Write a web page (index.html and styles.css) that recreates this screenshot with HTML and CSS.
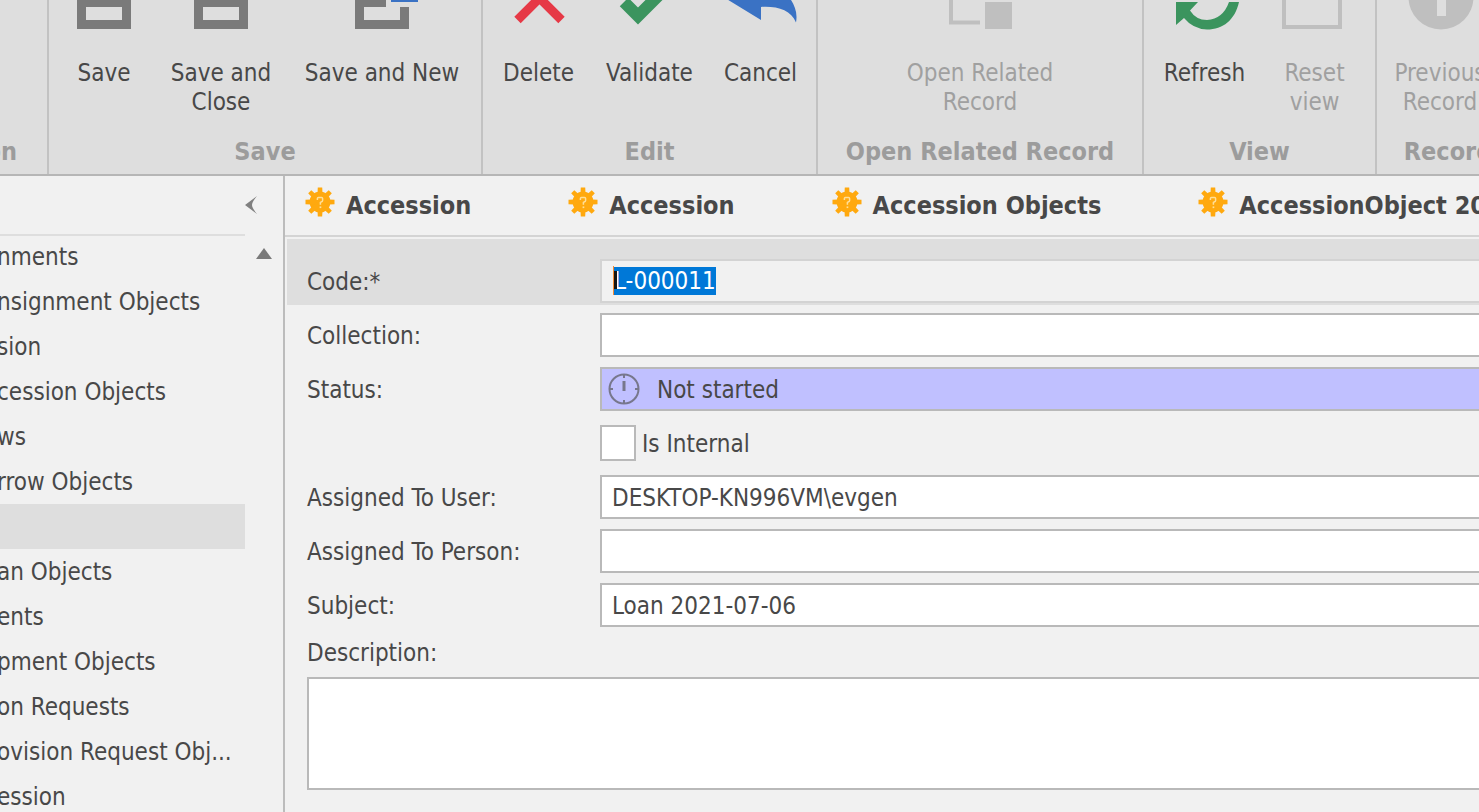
FILE: index.html
```html
<!DOCTYPE html>
<html lang="en">
<head>
<meta charset="utf-8">
<title>Loan</title>
<link rel="stylesheet" href="styles.css">
</head>
<body>
<svg class="defs" aria-hidden="true">
  <symbol id="gear" viewBox="0 0 30 30">
    <g fill="#ffa90f">
      <circle cx="15" cy="15" r="10.500"/>
      <path d="M12 15L12.800 0.500h4.400L18 15L17.200 29.500h-4.400z"/>
      <path d="M12 15L12.800 0.500h4.400L18 15L17.200 29.500h-4.400z" transform="rotate(45 15 15)"/>
      <path d="M12 15L12.800 0.500h4.400L18 15L17.200 29.500h-4.400z" transform="rotate(90 15 15)"/>
      <path d="M12 15L12.800 0.500h4.400L18 15L17.200 29.500h-4.400z" transform="rotate(135 15 15)"/>
    </g>
    <path d="M12.400 13v-1.600q0-1 1-1h3.200q1 0 1 1v2q0 1-1 1.400l-1.200.6v2.400" fill="none" stroke="#ffdf98" stroke-width="1.500"/>
    <path d="M14.600 19.400h1.700v1.700h-1.700z" fill="#ffdf98"/>
  </symbol>
</svg>

<header class="ribbon">
  <section class="group group-first"><div class="buttons"></div><h2>on</h2></section>
  <section class="group group-save">
    <div class="buttons">
      <button type="button"><svg viewBox="0 0 64 32"><path d="M5 0h54v29H5zM14 7v13h36V7z" fill="#7a7a7a" fill-rule="evenodd"/></svg><span>Save</span></button>
      <button type="button"><svg viewBox="0 0 64 32"><path d="M5 0h54v29H5zM14 7v13h36V7z" fill="#7a7a7a" fill-rule="evenodd"/></svg><span>Save and<br>Close</span></button>
      <button type="button"><svg viewBox="0 0 64 32"><path d="M5 0h31v7H14v13h36V7h9v22H5z" fill="#7a7a7a"/><path d="M41 0h27v2H41z" fill="#3a72c4"/></svg><span>Save and New</span></button>
    </div>
    <h2>Save</h2>
  </section>
  <section class="group group-edit">
    <div class="buttons">
      <button type="button"><svg viewBox="0 0 64 32"><path d="M10.500 20L32.500-2L54.500 20" fill="none" stroke="#e63946" stroke-width="9"/></svg><span>Delete</span></button>
      <button type="button"><svg viewBox="0 0 64 32"><path d="M6 2L20 16L46-10" fill="none" stroke="#3b945e" stroke-width="12"/></svg><span>Validate</span></button>
      <button type="button"><svg viewBox="0 0 64 32"><path d="M-4-2L32 20V7C48 6 62 10 67 22.500C69 12 65 4 60-3z" fill="#3a72c4"/></svg><span>Cancel</span></button>
    </div>
    <h2>Edit</h2>
  </section>
  <section class="group group-open">
    <div class="buttons">
      <button type="button" disabled><svg viewBox="0 0 64 32"><path d="M3 0V22.500H32" fill="none" stroke="#bfbfbf" stroke-width="4"/><path d="M37 2h27v27H37z" fill="#bfbfbf"/></svg><span>Open Related<br>Record</span></button>
    </div>
    <h2>Open Related Record</h2>
  </section>
  <section class="group group-view">
    <div class="buttons">
      <button type="button"><svg viewBox="0 0 64 32"><path d="M3 2H25L17 10.500Q23 20 34 20Q50 19 56 2H66C62 20 50 29.500 34 29.500Q20 29 11 18L3 25z" fill="#3b945e"/></svg><span>Refresh</span></button>
      <button type="button" disabled><svg viewBox="0 0 64 32"><path d="M1-2V27H57V0" fill="none" stroke="#bfbfbf" stroke-width="4"/></svg><span>Reset<br>view</span></button>
    </div>
    <h2>View</h2>
  </section>
  <section class="group group-record">
    <div class="buttons">
      <button type="button" disabled><svg viewBox="0 0 64 32"><circle cx="33" cy="-3" r="32.500" fill="#bfbfbf"/><path d="M29-4h9v20h-9z" fill="#dedede"/></svg><span>Previous<br>Record</span></button>
    </div>
    <h2>Record</h2>
  </section>
</header>

<div class="workspace">
  <aside class="sidebar">
    <div class="sidebar-head">
      <button type="button" aria-label="Collapse"><svg width="12" height="18" viewBox="0 0 12 18"><path d="M12 0L0 9L12 18Q7 12 7 9T12 0z" fill="#808080"/></svg></button>
    </div>
    <div class="sidebar-body">
      <nav>
        <a href="#">nments</a>
        <a href="#">nsignment Objects</a>
        <a href="#">sion</a>
        <a href="#">cession Objects</a>
        <a href="#">ws</a>
        <a href="#">rrow Objects</a>
        <a href="#" class="current" aria-label="Current"></a>
        <a href="#">an Objects</a>
        <a href="#">ents</a>
        <a href="#">pment Objects</a>
        <a href="#">on Requests</a>
        <a href="#">ovision Request Obj...</a>
        <a href="#">ession</a>
      </nav>
      <button type="button" class="scroll-up" aria-label="Scroll up"><svg width="16" height="11" viewBox="0 0 16 11"><path d="M8 0L16 11H0z" fill="#7a7a7a"/></svg></button>
    </div>
  </aside>

  <main>
    <div class="tabs">
      <button type="button"><svg><use href="#gear"/></svg><span>Accession</span></button>
      <button type="button"><svg><use href="#gear"/></svg><span>Accession</span></button>
      <button type="button"><svg><use href="#gear"/></svg><span>Accession Objects</span></button>
      <button type="button"><svg><use href="#gear"/></svg><span>AccessionObject 20</span></button>
    </div>
    <form>
      <div class="row row-active">
        <label for="code">Code:*</label>
        <div class="field"><input id="code" type="text" value="L-000011" readonly><i class="caret"></i></div>
      </div>
      <div class="row"><label for="collection">Collection:</label><input id="collection" type="text"></div>
      <div class="row">
        <label for="status">Status:</label>
        <div class="field">
          <select id="status"><option>Not started</option></select>
          <svg class="clock" viewBox="0 0 32 32"><circle cx="16" cy="16" r="14.500" fill="none" stroke="#77778c" stroke-width="2"/><path d="M16 2v3M16 27v3M2 16h3M27 16h3" stroke="#77778c" stroke-width="2"/><path d="M16 8v10" stroke="#77778c" stroke-width="3"/></svg>
        </div>
      </div>
      <div class="row row-check"><input id="internal" type="checkbox"><label for="internal">Is Internal</label></div>
      <div class="row"><label for="user">Assigned To User:</label><input id="user" type="text" value="DESKTOP-KN996VM\evgen"></div>
      <div class="row"><label for="person">Assigned To Person:</label><input id="person" type="text"></div>
      <div class="row"><label for="subject">Subject:</label><input id="subject" type="text" value="Loan 2021-07-06"></div>
      <div class="description"><label for="description">Description:</label><textarea id="description"></textarea></div>
    </form>
  </main>
</div>
<script src="main.js"></script>
</body>
</html>
```
FILE: styles.css
```css
* { box-sizing: border-box; }
body {
  margin: 0;
  height: 100vh;
  display: flex;
  flex-direction: column;
  overflow: hidden;
  background: #f1f1f1;
  color: #484848;
  font: 24px/29px "DejaVu Sans Condensed", "Noto Sans", sans-serif;
}
button, input, select, textarea { font: inherit; color: inherit; }
button { border: 0; padding: 0; background: none; }
.defs { position: absolute; width: 0; height: 0; }

.ribbon {
  display: flex;
  flex: none;
  background: #dedede;
  border-bottom: 2px solid #b6b6b6;
  overflow: hidden;
}
.group {
  flex: none;
  display: flex;
  flex-direction: column;
  border-right: 2px solid #c2c2c2;
  padding-bottom: 8px;
  overflow: hidden;
}
.group h2 {
  margin: 0;
  text-align: center;
  font-size: 25px;
  line-height: 29px;
  color: #9c9c9c;
  white-space: nowrap;
}
.buttons { display: grid; height: 137px; align-items: start; justify-content: center; }
.buttons button { display: flex; flex-direction: column; align-items: center; gap: 27px; white-space: nowrap; }
.buttons svg { width: 64px; height: 32px; overflow: visible; }
.buttons button:disabled { color: #a0a0a0; }
.group-first { width: 49px; padding-right: 30px; align-items: flex-end; }
.group-save { width: 434px; }
.group-save .buttons { grid-template-columns: 88px 146px 176px; }
.group-edit { width: 335px; }
.group-edit .buttons { grid-template-columns: repeat(3, 111px); }
.group-open { width: 326px; }
.group-view { width: 233px; }
.group-view .buttons { grid-template-columns: repeat(2, 110px); }
.group-record { width: 142px; border-right: 0; }
.group-record .buttons { grid-template-columns: 126px; justify-content: start; }

.workspace { display: flex; flex: 1; min-height: 0; }
.sidebar { flex: none; width: 285px; border-right: 2px solid #bcbcbc; overflow: hidden; }
.sidebar-head {
  display: flex;
  justify-content: flex-end;
  align-items: center;
  height: 58px;
  padding-right: 26px;
}
.sidebar-head button { display: flex; }
.sidebar-body { display: flex; align-items: flex-start; gap: 11px; }
nav { width: 245px; background: linear-gradient(#dedede, #dedede) top / 100% 2px no-repeat; overflow: hidden; }
nav a {
  display: block;
  height: 45px;
  line-height: 47px;
  color: inherit;
  text-decoration: none;
  white-space: nowrap;
  text-indent: -3px;
}
nav a.current { background: #dedede; }
.scroll-up { display: flex; padding-top: 14px; }

main { flex: 1; min-width: 0; overflow: hidden; }
.tabs {
  display: flex;
  gap: 97px;
  height: 61px;
  padding-left: 20px;
  border-bottom: 2px solid #d4d4d4;
  overflow: hidden;
}
.tabs button { flex: none; display: flex; align-items: center; gap: 11px; font-size: 25px; font-weight: bold; white-space: nowrap; }
.tabs svg { width: 30px; height: 30px; margin-bottom: 7px; }

form { display: flex; flex-direction: column; gap: 10px; padding: 2px 0 0 2px; }
.row { display: grid; grid-template-columns: 293px 1fr; align-items: center; height: 44px; padding-left: 20px; }
.row label { padding-top: 2px; }
.row-active { height: auto; margin-bottom: -2px; padding-top: 20px; padding-bottom: 2px; background: #dedede; }
.field { position: relative; }
.row input[type="text"], .row select, textarea {
  display: block;
  width: 100%;
  height: 44px;
  margin: 0;
  padding: 2px 10px 0;
  border: 2px solid #b9b9b9;
  border-right: 0;
  border-radius: 0;
  background: #fff;
  outline: 0;
}
.row-active input[type="text"] { padding: 0 12px; background: #f1f1f1; border-color: #d3d3d3; }
.row-active input::selection { background: #0078d7; color: #fff; }
.caret { position: absolute; left: 13px; top: 7px; width: 1px; height: 29px; background: #f58a32; }
.caret::after { content: ""; position: absolute; left: 1px; top: 5px; width: 3px; height: 18px; background: #151515; }
.row select { appearance: none; background: #c0c0ff; padding-left: 55px; }
.clock { position: absolute; left: 8px; top: 6px; width: 32px; height: 32px; }
.row-check { display: flex; gap: 6px; padding-left: 313px; }
.row-check input { appearance: none; width: 36px; height: 36px; margin: 0; border: 2px solid #b9b9b9; background: #fff; }
.description { padding-left: 20px; }
.description label { display: block; padding-top: 2px; margin-bottom: 9px; }
textarea { height: 113px; resize: none; }
```
FILE: main.js
```js
const code = document.getElementById("code");
code.focus();
code.select();
```
